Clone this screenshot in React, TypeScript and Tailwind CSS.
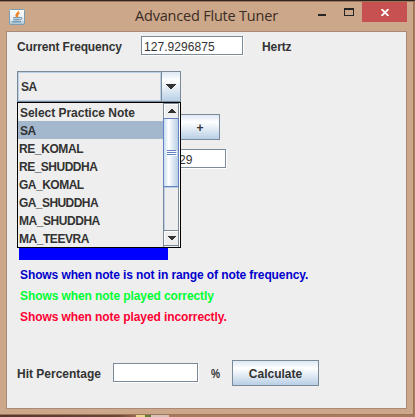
import React from "react";

const notes = [
  { name: "Select Practice Note", spacing: "tracking-[-0.03px] pl-[2px]" },
  { name: "SA", spacing: "tracking-[-0.4px] pl-[2px]" },
  { name: "RE_KOMAL", spacing: "tracking-[-0.4px] pl-px" },
  { name: "RE_SHUDDHA", spacing: "tracking-[-0.5px] pl-px" },
  { name: "GA_KOMAL", spacing: "tracking-[-0.5px] pl-px" },
  { name: "GA_SHUDDHA", spacing: "tracking-[-0.57px] pl-px" },
  { name: "MA_SHUDDHA", spacing: "tracking-[-0.45px] pl-px" },
  { name: "MA_TEEVRA", spacing: "tracking-[-0.45px] pl-px" },
];

function JavaIcon() {
  return (
    <svg width="16" height="16" viewBox="0 0 16 16">
      <defs>
        <linearGradient id="cup" x1="0" y1="0" x2="0" y2="1">
          <stop offset="0" stopColor="#fff" />
          <stop offset="0.65" stopColor="#e8eef2" />
          <stop offset="1" stopColor="#9fbdd0" />
        </linearGradient>
      </defs>
      <rect x="0.5" y="0.5" width="15" height="15" rx="1" fill="url(#cup)" stroke="#7d9cb0" />
      <path d="M9.5 2C10 4 5.5 4.5 7.5 8M10.8 4.2C8 5 8.3 6 8.8 8" fill="none" stroke="#f08224" strokeWidth="1.3" />
      <path d="M4 8.8h7M4.5 10.8h6M3 12.8h9M11 8.5c2.8-.4 2.5 1.8 0 2.4" fill="none" stroke="#557f9f" strokeWidth="1" />
    </svg>
  );
}

function Arrow({ up = false }: { up?: boolean }) {
  return (
    <svg width="8" height="4" viewBox="0 0 8 4" shapeRendering="crispEdges" fill="#333">
      <path d={up ? "M3 0h2v1h1v1h1v1h1v1H0V3h1V2h1V1h1z" : "M0 0h8v1H7v1H6v1H5v1H3V3H2V2H1V1H0z"} />
    </svg>
  );
}

function Field({ className, children }: { className: string; children?: React.ReactNode }) {
  return (
    <div className={`h-[19px] border border-[#7a8a99] bg-white text-[12px] leading-[20px] font-normal shadow-[1px_1px_0_#fff] ${className}`}>
      {children}
    </div>
  );
}

const metal = "border border-[#7a8a99] bg-[linear-gradient(#dde8f3_0%,#fff_30%,#b8cfe5_100%)]";

function Popup() {
  return (
    <div className="absolute top-[31px] left-0 flex h-[146px] w-[164px] border border-black bg-[#eee]">
      <div className="w-[145px] overflow-hidden whitespace-nowrap">
        {notes.map((n, i) => (
          <div key={n.name} className={`h-[18px] leading-[20px] ${n.spacing} ${i === 1 ? "bg-[#a3b8cc]" : ""}`}>
            {n.name}
          </div>
        ))}
      </div>
      <div className="flex w-[16px] flex-col border-x border-[#7a8a99]">
        <div className="flex h-[15px] items-center justify-center border-t border-[#7a8a99] bg-[#eee] pl-[2px] shadow-[inset_1px_1px_0_#fff]">
          <Arrow up />
        </div>
        <div className="-mx-px flex h-[69px] flex-col items-center justify-center gap-px border border-[#6382bf] bg-[linear-gradient(90deg,#c8ddf2_0%,#fff_32%,#b8cfe5_100%)]">
          <i className="h-px w-[9px] bg-[#6382bf] shadow-[1px_1px_0_#fff]" />
          <i className="h-px w-[9px] bg-[#6382bf] shadow-[1px_1px_0_#fff]" />
          <i className="h-px w-[9px] bg-[#6382bf] shadow-[1px_1px_0_#fff]" />
        </div>
        <div className="h-[43px] border-t border-l border-[#b8cfe5]" />
        <div className="flex h-[16px] items-center justify-center border-y border-[#7a8a99] pl-[2px] shadow-[inset_1px_1px_0_#fff]">
          <Arrow />
        </div>
      </div>
      <div className="w-px bg-white" />
    </div>
  );
}

export default function App() {
  return (
    <div className="flex h-[417px] w-[415px] flex-col overflow-hidden bg-[linear-gradient(90deg,#57372b_0%,#6a4734_28%,#a67a5b_35%,#a97c5e_100%)] font-['Liberation_Sans',Arial,sans-serif] text-[12px] font-bold text-[#333]">
      <div className="h-px shrink-0 bg-[#2c241d]" />
      <div className="flex h-[414px] w-[414px] shrink-0 flex-col border-t border-r border-b border-[#9d7459] bg-[#cca789] pl-[6px]">
        <header className="flex h-[29px] items-start">
          <div className="ml-[3px] pt-[7px]">
            <JavaIcon />
          </div>
          <h1 className="ml-[110px] w-[183px] pt-[4px] font-['Open_Sans',sans-serif] text-[14.5px] leading-[20px] font-normal tracking-[-0.2px] whitespace-nowrap text-[#3a2d25]">
            Advanced Flute Tuner
          </h1>
          <div className="mt-[12px] h-[2px] w-[8px] bg-[#252525]" />
          <div className="mt-[6px] ml-[18px] h-[8px] w-[10px] border border-t-2 border-[#252525]" />
          <div className="ml-[8px] flex h-[20px] w-[45px] items-center justify-center bg-[#c75050]">
            <svg width="8" height="7" viewBox="0 0 8 7" stroke="#fff" strokeWidth="1.8">
              <path d="M.5 0l7 7M7.5 0l-7 7" />
            </svg>
          </div>
        </header>
        <main className="h-[378px] w-[401px] border border-[#aa8a76] bg-[#eee] pl-[10px]">
          <div className="flex h-[39px] items-start pt-[4px] leading-[22px]">
            <span className="w-[124px] tracking-[-0.15px]">Current Frequency</span>
            <Field className="w-[102px] pl-[2px] tracking-[0.05px]">127.9296875</Field>
            <span className="ml-[19px] tracking-[-0.1px]">Hertz</span>
          </div>
          <div className="relative">
            <div className="flex h-[31px] w-[164px] border border-[#7a8a99]">
              <div className="flex-1 border border-[#b8cfe5] pl-[2px] leading-[29px] tracking-[-0.4px]">SA</div>
              <div className="flex w-[19px] items-center justify-center border-l border-[#7a8a99] bg-[linear-gradient(#dde8f3_0%,#fff_30%,#b8cfe5_100%)]">
                <svg width="10" height="5" viewBox="0 0 10 5" shapeRendering="crispEdges" fill="#333">
                  <path d="M0 0h10v1H9v1H8v1H7v1H6v1H4V4H3V3H2V2H1V1H0z" />
                </svg>
              </div>
            </div>
            <Popup />
          </div>
          <div className="mt-[12px] ml-[162px]">
            <div className={`flex h-[26px] w-[41px] items-center justify-center pl-px pt-px ${metal}`}>+</div>
          </div>
          <Field className="mt-[9px] ml-[140px] w-[69px] pl-[21px]">29</Field>
          <div className="mt-[79px] ml-[2px] h-[13px] w-[149px] bg-[blue]" />
          <div className="ml-[3px] pt-[5px] leading-[21px]">
            <p className="tracking-[-0.1px] text-[#0000cd]">Shows when note is not in range of note frequency.</p>
            <p className="tracking-[-0.09px] text-[#00ff33]">Shows when note played correctly</p>
            <p className="tracking-[-0.09px] text-[#ff0033]">Shows when note played incorrectly.</p>
          </div>
          <div className="mt-[32px] flex h-[26px] items-center">
            <span className="w-[96px] pt-[2px]">Hit Percentage</span>
            <Field className="mb-px w-[85px]" />
            <span className="ml-[13px] w-[21px] pt-[2px] tracking-[-1px]">
              <span className="inline-block origin-left scale-x-[0.85]">%</span>
            </span>
            <div className={`flex h-[26px] w-[87px] items-center justify-center pt-[2px] ${metal}`}>Calculate</div>
          </div>
        </main>
      </div>
      <div className="flex h-[2px] shrink-0 pl-[136px]">
        <div className="h-full w-[9px] bg-[#e9d88e]" />
        <div className="h-full w-[6px] bg-[#657b2f]" />
        <div className="h-full w-[18px] bg-[#d5c2bb]" />
      </div>
    </div>
  );
}
